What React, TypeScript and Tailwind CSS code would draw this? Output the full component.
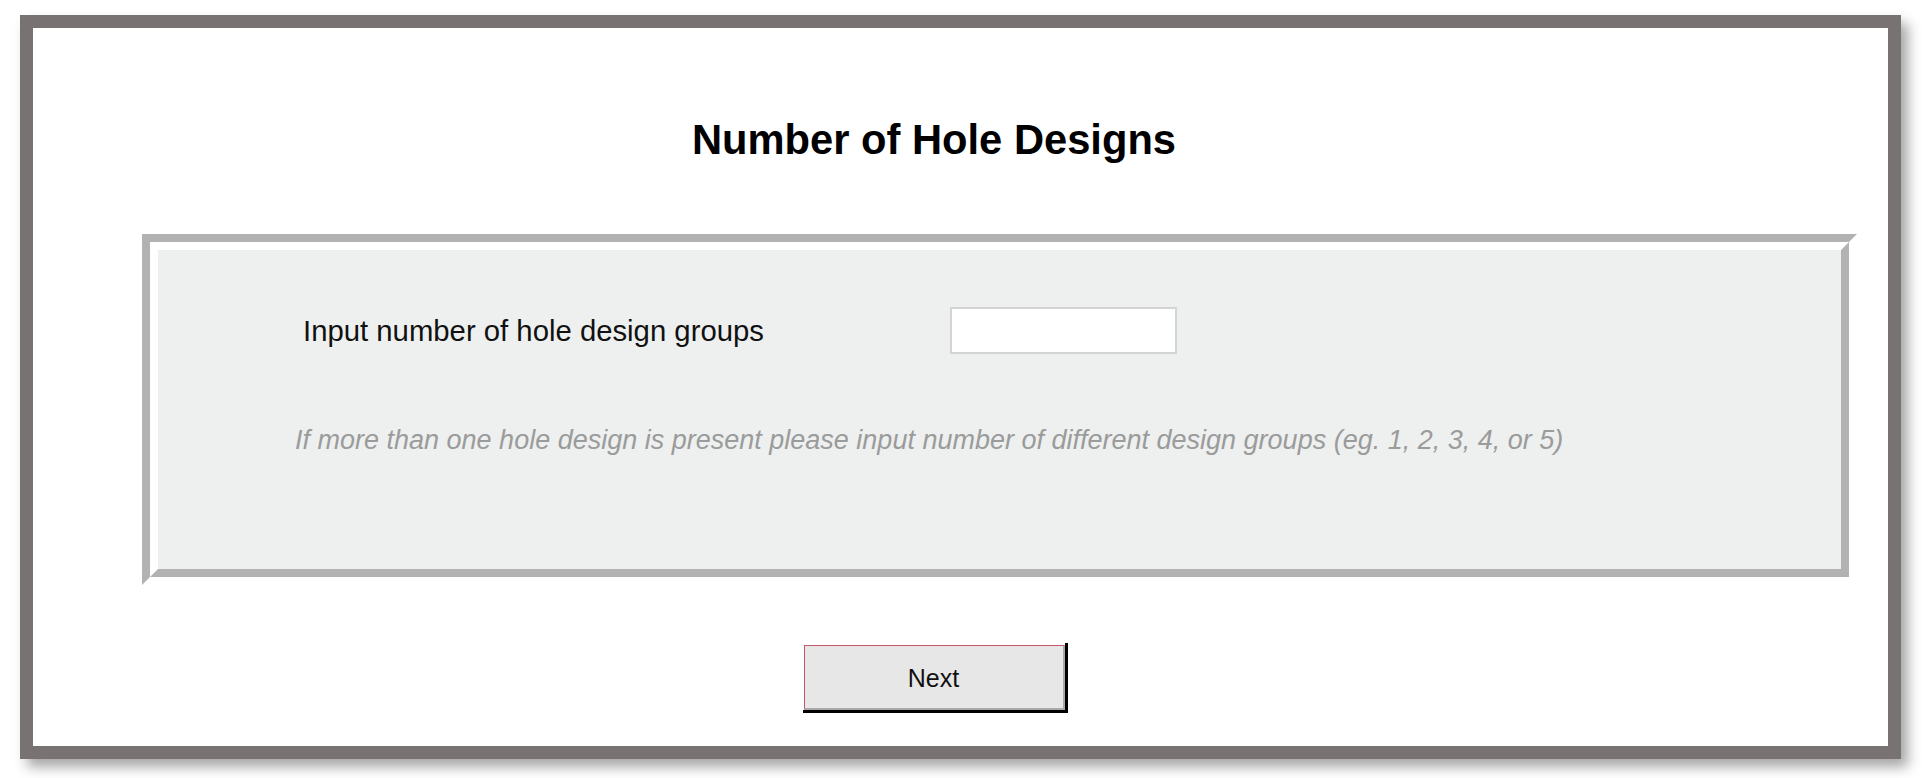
import React from "react";

export default function App() {
  return (
    <div className="min-h-screen w-full bg-white pl-[20px] pt-[15px] font-['Liberation_Sans',Arial,sans-serif]">
      {/* Window frame */}
      <div className="w-[1881px] h-[744px] border-[13px] border-[#787372] bg-white shadow-[7px_8px_12px_rgba(0,0,0,0.35)]">
        <div className="w-[1802px] flex flex-col">
          <h1 className="mt-[92px] text-center text-[41.7px] leading-[40px] font-bold text-black">
            Number of Hole Designs
          </h1>
        </div>

        {/* Grooved panel */}
        <div className="ml-[109px] mt-[74px] w-[1715px] h-[351px] border-[8px] border-t-[#b2b2b2] border-l-[#b2b2b2] border-r-white border-b-white">
          <div className="h-full w-full border-[8px] border-t-white border-l-white border-r-[#b2b2b2] border-b-[#b2b2b2] bg-[#edf0ef] flex flex-col">
            <div className="mt-[57px] flex items-center">
              <label className="ml-[145px] w-[647px] text-[29.3px] leading-[29px] text-[#111]">
                Input number of hole design groups
              </label>
              <input
                type="text"
                className="w-[227px] h-[47px] bg-white border-2 border-[#d4d4d4] outline-none px-2 text-[24px]"
              />
            </div>
            <p className="ml-[137px] mt-[73px] text-[27px] leading-[27px] italic text-[#9b9b9b]">
              If more than one hole design is present please input number of different design groups (eg. 1, 2, 3, 4, or 5)
            </p>
          </div>
        </div>

        {/* Next button */}
        <div className="w-[1804px] flex justify-center mt-[58px]">
          <div className="border-r-[3px] border-b-[3px] border-black pt-[2px] pl-[1px]">
            <button className="w-[261px] h-[65px] pt-[4px] bg-[#e7e7e7] border-t-[1.5px] border-l-[1.5px] border-t-[#c2586a] border-l-[#c2586a] border-r-2 border-b-2 border-r-[#a9a9a9] border-b-[#a9a9a9] text-[25px] text-[#111]">
              Next
            </button>
          </div>
        </div>
      </div>
    </div>
  );
}
